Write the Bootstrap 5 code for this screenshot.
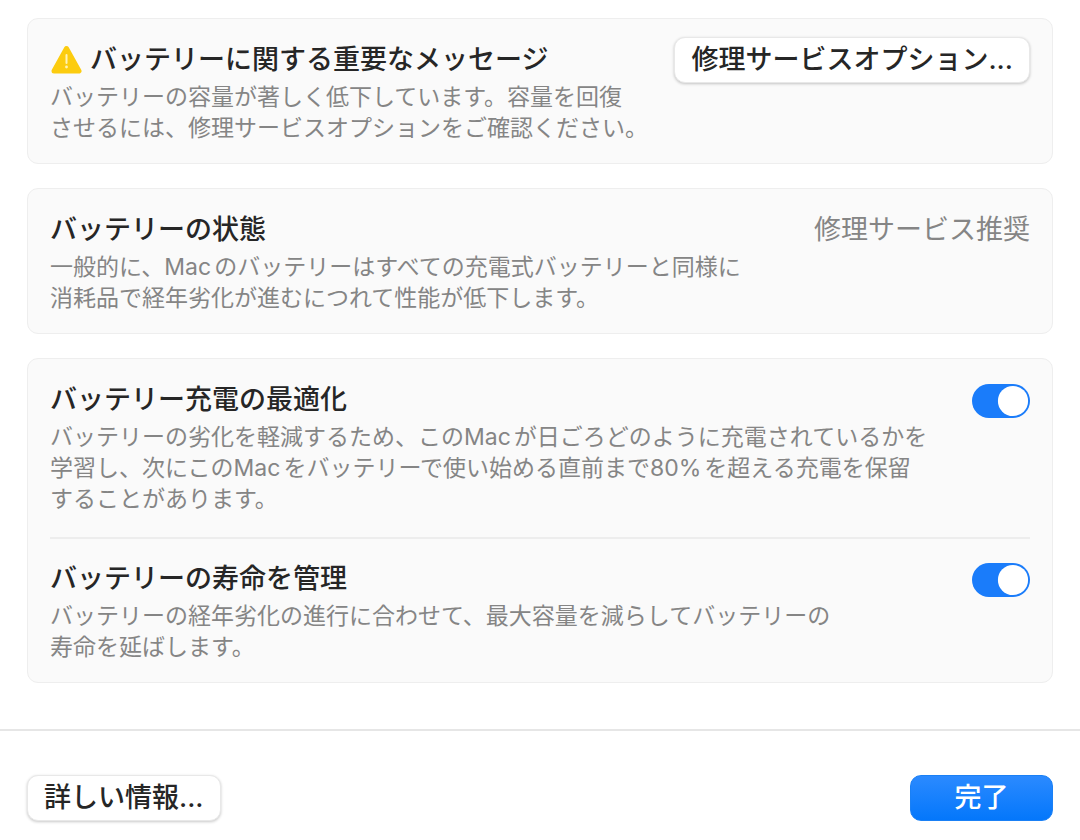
<!DOCTYPE html>
<html lang="ja">
<head>
<meta charset="utf-8">
<meta name="viewport" content="width=device-width, initial-scale=1">
<title>バッテリーの状態</title>
<link href="https://cdn.jsdelivr.net/npm/bootstrap@5.3.0/dist/css/bootstrap.min.css" rel="stylesheet">
<style>
body{font-family:Inter,"Noto Sans CJK JP",sans-serif;background:#fff;color:#262626}
.sheet{padding:18px 27px 0}
.panel{background:#fafafa;border:1px solid #eee;border-radius:11px;padding:23px 22px 19px}
.panel .title{font-size:27px;line-height:36px;font-weight:500;margin:0 0 4px}
.desc{font-size:23px;line-height:31px;color:#858585;margin:0}
.latin{margin-right:3px}
.status{font-size:27px;line-height:36px;color:#858585}
.btn-mac{font-size:27px;line-height:36px;font-weight:500;padding:4px 16px;border-radius:11px;border:1px solid #e8e8e8;background:#fff;color:#262626;box-shadow:0 1px 3px rgba(0,0,0,.22)}
.btn-service{margin-top:-5px}
.btn-done{min-width:143px;color:#fff;background:linear-gradient(#2b8aff,#0477fb);border-color:#1a80f5;box-shadow:none}
.switch-mac.form-check-input{width:58px;height:34px;margin:2px 0 0;border:0;background-color:#1a7cfa}
.switch-mac.form-check-input:checked,.switch-mac.form-check-input:focus{background-color:#1a7cfa;background-image:url("data:image/svg+xml,%3csvg xmlns='http://www.w3.org/2000/svg' viewBox='-4 -4 8 8'%3e%3ccircle r='3.55' fill='%23fff'/%3e%3c/svg%3e")}
.rule{border-top:2px solid #ededed;margin:22px 0}
.footer-bar{border-top:2px solid #e6e6e6;margin-top:46px;padding:44px 27px 17px}
</style>
</head>
<body>
<main class="sheet d-flex flex-column gap-4">
<section class="panel d-flex justify-content-between align-items-start">
<div>
<h2 class="title d-flex align-items-center gap-2"><svg width="32" height="30" viewBox="0 0 32 30" aria-hidden="true"><path d="M16.500 3.500 L29 26 H4Z" fill="#fccc0f" stroke="#fccc0f" stroke-width="5" stroke-linejoin="round"/><path d="M16.500 10v8" stroke="#fff3b8" stroke-width="2" stroke-linecap="round"/><circle cx="16.500" cy="22" r="1.400" fill="#fff3b8"/></svg>バッテリーに関する重要なメッセージ</h2>
<p class="desc">バッテリーの容量が著しく低下しています。容量を回復<br>させるには、修理サービスオプションをご確認ください。</p>
</div>
<button type="button" class="btn btn-mac btn-service">修理サービスオプション...</button>
</section>
<section class="panel d-flex justify-content-between align-items-start">
<div><h2 class="title">バッテリーの状態</h2>
<p class="desc">一般的に、<span class="latin">Mac</span>のバッテリーはすべての充電式バッテリーと同様に<br>消耗品で経年劣化が進むにつれて性能が低下します。</p></div>
<span class="status">修理サービス推奨</span>
</section>
<section class="panel">
<div class="d-flex justify-content-between align-items-start">
<div><label class="title d-block" for="optimize">バッテリー充電の最適化</label>
<p class="desc">バッテリーの劣化を軽減するため、この<span class="latin">Mac</span>が日ごろどのように充電されているかを<br>学習し、次にこの<span class="latin">Mac</span>をバッテリーで使い始める直前まで<span class="latin">80%</span>を超える充電を保留<br>することがあります。</p></div>
<div class="form-check form-switch p-0 m-0"><input class="form-check-input switch-mac" type="checkbox" role="switch" id="optimize" checked></div>
</div>
<div class="rule"></div>
<div class="d-flex justify-content-between align-items-start">
<div><label class="title d-block" for="manage">バッテリーの寿命を管理</label>
<p class="desc">バッテリーの経年劣化の進行に合わせて、最大容量を減らしてバッテリーの<br>寿命を延ばします。</p></div>
<div class="form-check form-switch p-0 m-0"><input class="form-check-input switch-mac" type="checkbox" role="switch" id="manage" checked></div>
</div>
</section>
</main>
<footer class="footer-bar d-flex justify-content-between">
<button type="button" class="btn btn-mac">詳しい情報...</button>
<button type="button" class="btn btn-mac btn-done">完了</button>
</footer>
<script src="https://cdn.jsdelivr.net/npm/bootstrap@5.3.0/dist/js/bootstrap.bundle.min.js"></script>
</body>
</html>
